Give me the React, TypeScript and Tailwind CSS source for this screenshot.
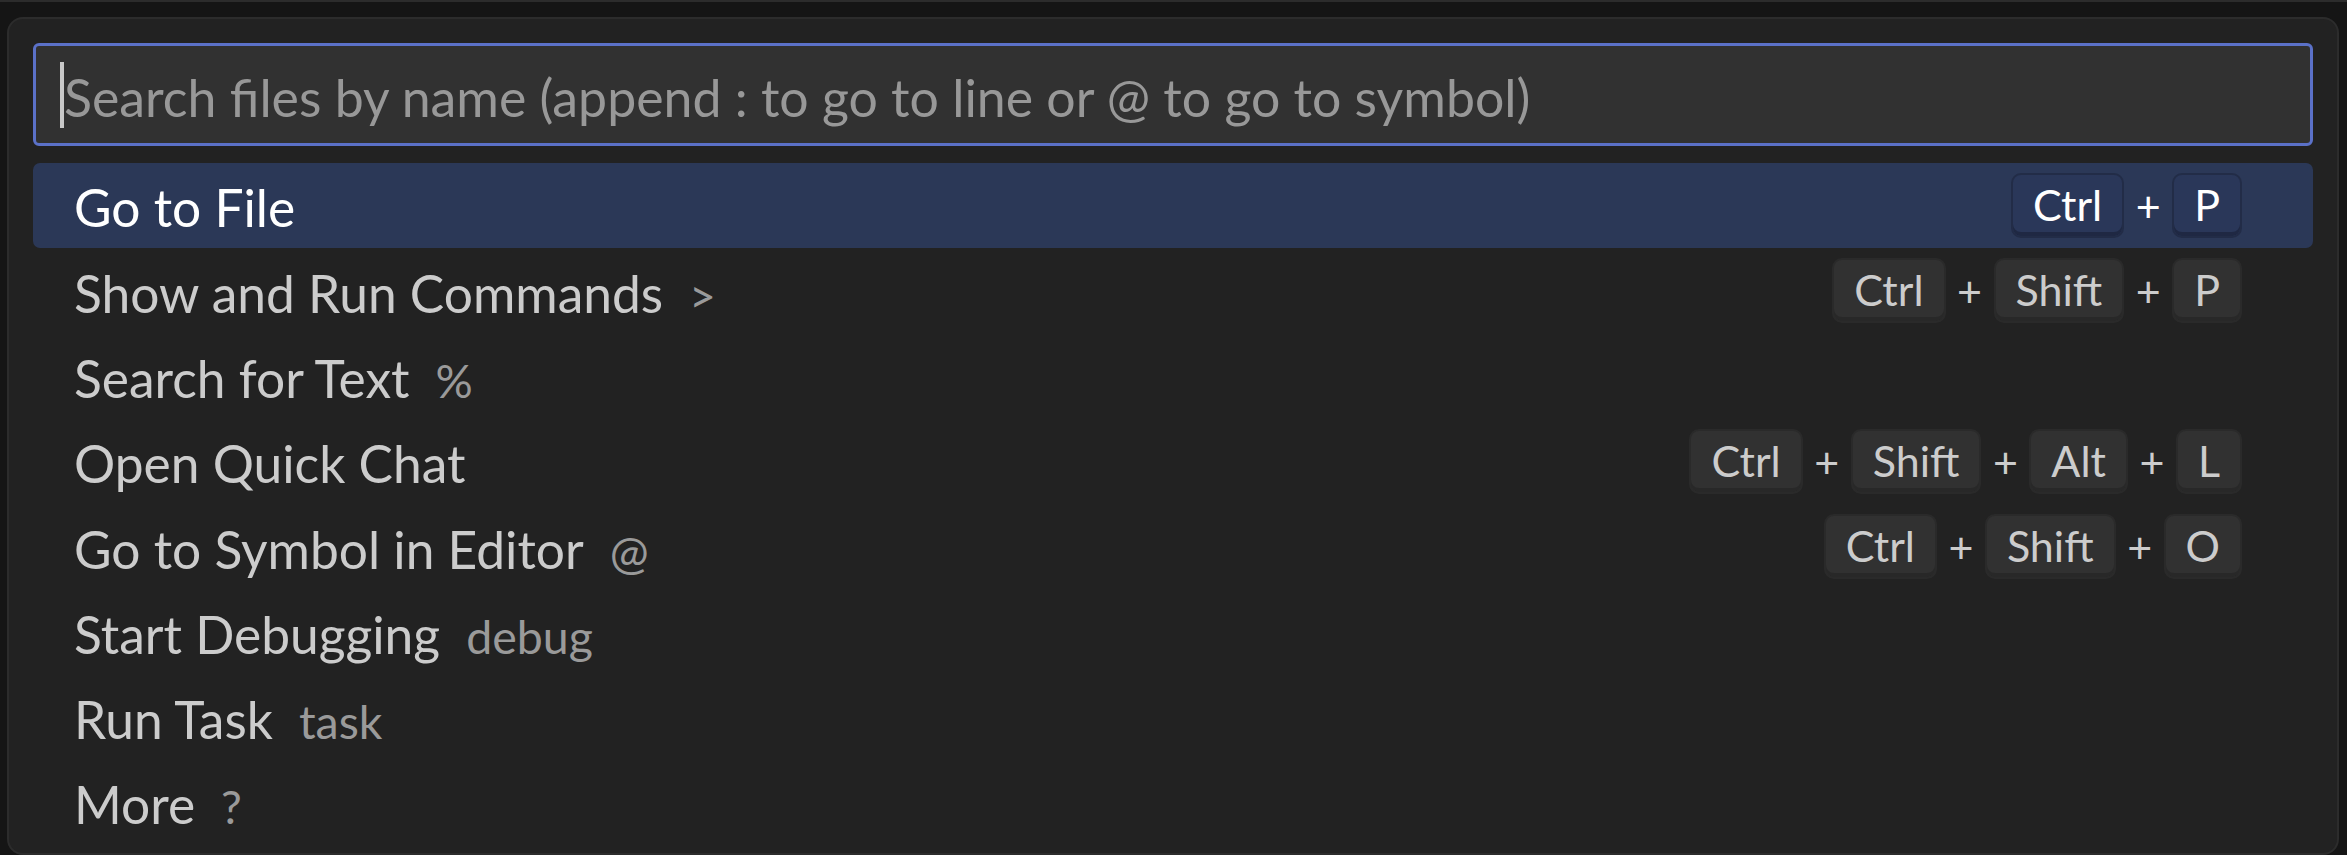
const font = { fontFamily: "Lato, 'Noto Sans', sans-serif" };

type Item = {
  label: string;
  desc?: string;
  keys?: string[];
};

const items: Item[] = [
  { label: "Go to File", keys: ["Ctrl", "P"] },
  { label: "Show and Run Commands", desc: ">", keys: ["Ctrl", "Shift", "P"] },
  { label: "Search for Text", desc: "%" },
  { label: "Open Quick Chat", keys: ["Ctrl", "Shift", "Alt", "L"] },
  { label: "Go to Symbol in Editor", desc: "@", keys: ["Ctrl", "Shift", "O"] },
  { label: "Start Debugging", desc: "debug" },
  { label: "Run Task", desc: "task" },
  { label: "More", desc: "?" },
];

function Key({ text, active }: { text: string; active: boolean }) {
  return (
    <span
      className={
        "inline-flex h-[65px] items-center rounded-[10px] border-2 px-[20px] pb-[2px] text-[43px] leading-none " +
        (active
          ? "border-[#222c47] bg-[#2a3759] text-white shadow-[inset_0_-4px_0_#1f2843]"
          : "border-[#2a2a2a] bg-[#313131] text-[#cccccc] shadow-[inset_0_-4px_0_#282828]")
      }
    >
      {text}
    </span>
  );
}

function Row({ item, active }: { item: Item; active: boolean }) {
  return (
    <div
      className={
        "flex h-[85.3px] items-center rounded-[7px] pl-[41px] pr-[71px] " +
        (active ? "bg-[#2b3857] text-white" : "text-[#cccccc]")
      }
    >
      <div className="flex items-baseline pt-[5px]">
        <span className="text-[51.5px] leading-none">{item.label}</span>
        {item.desc && (
          <span className="ml-[26px] text-[46.5px] leading-none text-[#9a9a9a]">
            {item.desc}
          </span>
        )}
      </div>
      {item.keys && (
        <div className="ml-auto flex items-center">
          {item.keys.map((k, i) => (
            <span key={k} className="flex items-center">
              {i > 0 && (
                <span className="mx-[11.5px] text-[43px] leading-none">+</span>
              )}
              <Key text={k} active={active} />
            </span>
          ))}
        </div>
      )}
    </div>
  );
}

export default function App() {
  return (
    <div
      className="flex h-[855px] w-[2347px] flex-col overflow-hidden border-t-2 border-[#2c2c2c] bg-[#151515]"
      style={font}
    >
      <div className="mt-[15px] ml-[7px] mr-[8px] h-[838px] rounded-[16px] border-2 border-[#2c2c2c] bg-[#222222] px-[24px] pt-[24px]">
        {/* Search box */}
        <div className="flex h-[103px] items-center rounded-[6px] border-[3px] border-[#5b71c8] bg-[#313131] pl-[24px]">
          <span className="h-[66px] w-[4px] bg-[#c8c8c8]" />
          <span className="pt-[7px] text-[51.8px] leading-none text-[#989898]">
            Search files by name (append : to go to line or @ to go to symbol)
          </span>
        </div>

        {/* Items */}
        <div className="mt-[17px] flex flex-col">
          {items.map((item, i) => (
            <Row key={item.label} item={item} active={i === 0} />
          ))}
        </div>
      </div>
    </div>
  );
}
